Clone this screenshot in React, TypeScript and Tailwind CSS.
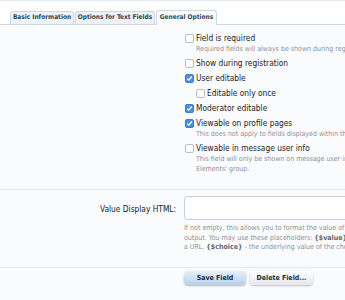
import React from "react";

function Check({ checked }: { checked?: boolean }) {
  return (
    <span
      className={
        "inline-flex h-[9px] w-[9px] shrink-0 items-center justify-center rounded-[2px] border " +
        (checked ? "border-[#3a7fd0] bg-[#4a8fe0]" : "border-[#b9bdc5] bg-white")
      }
    >
      {checked && (
        <svg width="7" height="7" viewBox="0 0 7 7">
          <path d="M1.2 3.6 L2.8 5.1 L5.8 1.5" stroke="white" strokeWidth="1.3" fill="none" />
        </svg>
      )}
    </span>
  );
}

function Option({
  label,
  checked,
  hint,
  indent,
}: {
  label: string;
  checked?: boolean;
  hint?: React.ReactNode;
  indent?: boolean;
}) {
  return (
    <div className={indent ? "pl-[11px]" : ""}>
      <div className="flex items-center gap-[2px] whitespace-nowrap text-[8.3px] leading-[11px] text-[#222]">
        <Check checked={checked} />
        <span>{label}</span>
      </div>
      {hint && (
        <div className="whitespace-nowrap pl-[11px] text-[7px] leading-[10px] text-[#8d9198]">{hint}</div>
      )}
    </div>
  );
}

export default function App() {
  return (
    <div
      className="h-[300px] w-[345px] overflow-hidden bg-[#fafbfd]"
      style={{ fontFamily: '"DejaVu Sans Condensed", "Liberation Sans", Arial, sans-serif' }}
    >
      <div className="border-t border-[#e7edf4] bg-white pt-[9px]">
        <div className="flex items-end gap-[1px] border-b border-[#cfd8e3] pl-[10px]">
          <div className="flex h-[13px] w-[64px] items-center justify-center rounded-t-[3px] border border-b-0 border-[#cfd6df] bg-[#eef2f6] text-[6.5px] font-bold text-[#2f4456]">
            Basic Information
          </div>
          <div className="flex h-[13px] w-[80px] items-center justify-center rounded-t-[3px] border border-b-0 border-[#cfd6df] bg-[#eef2f6] text-[6.5px] font-bold text-[#2f4456]">
            Options for Text Fields
          </div>
          <div className="-mb-[1px] flex h-[15px] w-[61px] items-center justify-center rounded-t-[3px] border border-b-0 border-[#cfd6df] bg-[#fafbfd] text-[6.5px] font-bold text-[#2f4456]">
            General Options
          </div>
        </div>
      </div>

      <div className="flex flex-col gap-[4px] pl-[185px] pt-[8px]">
        <Option label="Field is required" hint="Required fields will always be shown during registration." />
        <Option label="Show during registration" />
        <Option label="User editable" checked />
        <Option label="Editable only once" indent />
        <Option label="Moderator editable" checked />
        <Option
          label="Viewable on profile pages"
          checked
          hint="This does not apply to fields displayed within the custom user fields."
        />
        <Option
          label="Viewable in message user info"
          hint={
            <>
              This field will only be shown on message user info if it is in the
              <br />
              Elements' group.
            </>
          }
        />
      </div>

      <div className="mt-[15px] border-t border-[#e6eaef]" />

      <div className="flex pt-[6px]">
        <div className="w-[184px] shrink-0 whitespace-nowrap pr-[8px] pt-[8px] text-right text-[8.3px] leading-[11px] text-[#222]">
          Value Display HTML:
        </div>
        <div className="min-w-0 flex-1">
          <div className="h-[24px] w-[200px] rounded-l-[3px] border border-[#c9ced6] bg-white" />
          <div className="mt-[4px] whitespace-nowrap text-[7px] leading-[9.5px] text-[#8d9198]">
            If not empty, this allows you to format the value of the field for
            <br />
            output. You may use these placeholders: <b className="text-[#666]">{"{$value}"}</b> - the value
            <br />
            a URL, <b className="text-[#666]">{"{$choice}"}</b> - the underlying value of the chosen option.
          </div>
        </div>
      </div>

      <div className="mt-[14px] border-t border-[#e6eaef]" />

      <div className="flex gap-[4px] pl-[184px] pt-[3px]">
        <button className="h-[14px] w-[62px] rounded-[4px] bg-gradient-to-b from-[#e6f0f9] to-[#b6d1ea] text-[7px] font-bold leading-[14px] text-[#1f2f3d] shadow-[0_1px_2px_rgba(0,0,0,0.25)]">
          Save Field
        </button>
        <button className="h-[14px] w-[63px] rounded-[4px] bg-gradient-to-b from-[#ffffff] to-[#e4e7ec] text-[7px] font-bold leading-[14px] text-[#1f2f3d] shadow-[0_1px_2px_rgba(0,0,0,0.25)]">
          Delete Field...
        </button>
      </div>
    </div>
  );
}
